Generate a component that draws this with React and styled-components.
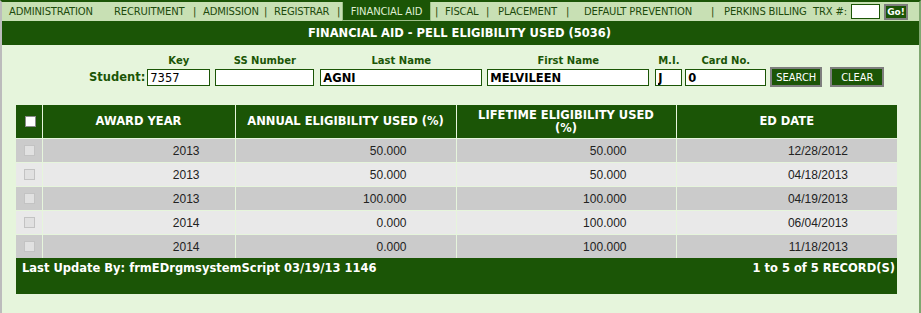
import React from "react";
import styled, { createGlobalStyle } from "styled-components";

const DARK = "#1b5506";
const PALE = "#e6f5dc";

const GlobalStyle = createGlobalStyle`
  html, body {
    margin: 0;
    padding: 0;
    background: ${PALE};
  }
  body {
    font-family: "DejaVu Sans", Tahoma, Verdana, sans-serif;
  }
`;

const Page = styled.div`
  height: 313px;
  box-sizing: border-box;
  border-left: 2px solid #bcbcbc;
  border-right: 2px solid #7fa770;
  border-top: 2px solid ${DARK};
  background: ${PALE};
`;

const NavBar = styled.div`
  height: 19px;
  background: #c8e0b4;
  display: flex;
  align-items: center;
  font-size: 10px;
  letter-spacing: -0.15px;
  color: #1d4a0c;
  white-space: nowrap;
`;

const NavItem = styled.span`
  flex: none;
  display: flex;
  align-items: center;
  justify-content: ${(p) => (p.$active ? "center" : "flex-start")};
  width: ${(p) => p.$w}px;
  height: 19px;
  box-sizing: border-box;
  margin-left: ${(p) => p.$ml || 0}px;
  ${(p) =>
    p.$active &&
    `
    background: ${DARK};
    color: #dfeed3;
    border: 1px solid #9dbf88;
    border-top: none;
  `}
`;

const Sep = styled.span`
  flex: none;
  width: 3px;
  text-align: center;
  margin-left: ${(p) => p.$ml}px;
  color: #1d4a0c;
`;

const TrxInput = styled.input`
  flex: none;
  width: 29px;
  height: 15px;
  box-sizing: border-box;
  margin: 0;
  padding: 0;
  border: 1px solid ${DARK};
  background: #fff;
`;

const GoButton = styled.button`
  flex: none;
  margin-left: 4px;
  height: 16px;
  width: 24px;
  padding: 0;
  box-sizing: border-box;
  background: ${DARK};
  color: #fff;
  font: bold 9px "DejaVu Sans", Tahoma, sans-serif;
  border: 2px solid #7d7d7d;
`;

const TitleBar = styled.div`
  height: 24px;
  background: ${DARK};
  color: #fff;
  font-weight: bold;
  font-size: 11.5px;
  display: flex;
  align-items: center;
  justify-content: center;
  padding-right: 2px;
`;

const SearchForm = styled.div`
  display: flex;
  align-items: flex-end;
  padding: 10px 0 0 87px;
`;

const StudentLabel = styled.div`
  color: ${DARK};
  font-weight: bold;
  font-size: 11.5px;
  height: 17px;
  line-height: 17px;
  margin-right: 2px;
`;

const Field = styled.div`
  display: flex;
  flex-direction: column;
  align-items: center;
  margin-left: ${(p) => p.$ml || 0}px;
`;

const FieldLabel = styled.label`
  color: ${DARK};
  font-weight: bold;
  font-size: 10px;
  height: 14px;
  line-height: 12px;
`;

const TextInput = styled.input`
  width: ${(p) => p.$w}px;
  height: 17px;
  box-sizing: border-box;
  margin: 0;
  padding: 0 2px;
  border: 1px solid ${DARK};
  background: #fff;
  color: #000;
  font-family: "DejaVu Sans", Tahoma, sans-serif;
  font-size: 11.5px;
  font-weight: ${(p) => (p.$bold ? "bold" : "normal")};
`;

const ActionButton = styled.button`
  width: ${(p) => p.$w}px;
  height: 20px;
  margin: 0 0 -1px ${(p) => p.$ml}px;
  box-sizing: border-box;
  padding: 0;
  background: ${DARK};
  color: #fff;
  border: 2px solid #7e7e7e;
  font-family: "DejaVu Sans Condensed", "DejaVu Sans", Tahoma, sans-serif;
  font-size: 11px;
`;

const Grid = styled.table`
  margin: 19px 0 0 14px;
  width: 881px;
  border-collapse: collapse;
  table-layout: fixed;
`;

const HeadCell = styled.th`
  background: ${DARK};
  color: #fff;
  font-weight: bold;
  font-size: 11.5px;
  height: 33px;
  padding: 0;
  text-align: center;
  line-height: 13px;
  border-left: 1px solid ${PALE};
  &:first-child {
    border-left: none;
  }
`;

const Row = styled.tr`
  background: ${(p) => (p.$alt ? "#e9e9e9" : "#cbcbcb")};
  border-top: 1px solid ${PALE};
`;

const Cell = styled.td`
  height: 21px;
  padding: 0 ${(p) => p.$pr}px 0 0;
  text-align: right;
  font-family: "Liberation Sans", Arial, sans-serif;
  font-size: 12px;
  line-height: 14px;
  color: #222;
  border-left: 1px solid ${PALE};
  &:first-child {
    border-left: none;
    text-align: left;
    padding-left: 8px;
  }
`;

const Box = styled.span`
  display: block;
  width: 11px;
  height: 11px;
  box-sizing: border-box;
  background: ${(p) => (p.$white ? "#fff" : "#e1e1e1")};
  border: 1px solid ${(p) => (p.$white ? "#8a8a8a" : "#c3c3c3")};
`;

const HeadBox = styled(Box)`
  margin-left: 9px;
`;

const FootCell = styled.td`
  background: ${DARK};
  color: #fff;
  font-weight: bold;
  font-size: 11.5px;
  height: 33px;
  line-height: 14px;
  vertical-align: top;
  padding: 3px 2px 0 6px;
`;

const FootInner = styled.div`
  display: flex;
  justify-content: space-between;
`;

const navItems = [
  { label: "ADMINISTRATION", ml: 7, w: 84 },
  { label: "RECRUITMENT", ml: 21, w: 70 },
  { sep: true, ml: 9 },
  { label: "ADMISSION", ml: 7, w: 54 },
  { sep: true, ml: 7 },
  { label: "REGISTRAR", ml: 7, w: 56 },
  { sep: true, ml: 7 },
  { label: "FINANCIAL AID", ml: 2, w: 89, active: true },
  { sep: true, ml: 4 },
  { label: "FISCAL", ml: 7, w: 33 },
  { sep: true, ml: 8 },
  { label: "PLACEMENT", ml: 9, w: 60 },
  { sep: true, ml: 8 },
  { label: "DEFAULT PREVENTION", ml: 15, w: 112 },
  { sep: true, ml: 15 },
  { label: "PERKINS BILLING", ml: 10, w: 82 },
  { label: "TRX #:", ml: 7, w: 38 },
];

const rows = [
  { year: "2013", annual: "50.000", lifetime: "50.000", date: "12/28/2012" },
  { year: "2013", annual: "50.000", lifetime: "50.000", date: "04/18/2013" },
  { year: "2013", annual: "100.000", lifetime: "100.000", date: "04/19/2013" },
  { year: "2014", annual: "0.000", lifetime: "100.000", date: "06/04/2013" },
  { year: "2014", annual: "0.000", lifetime: "100.000", date: "11/18/2013" },
];

const App = () => {
  return (
    <Page>
      <GlobalStyle />
      <NavBar>
        {navItems.map((item, i) =>
          item.sep ? (
            <Sep key={i} $ml={item.ml}>
              |
            </Sep>
          ) : (
            <NavItem key={i} $ml={item.ml} $w={item.w} $active={item.active}>
              {item.label}
            </NavItem>
          )
        )}
        <TrxInput />
        <GoButton>Go!</GoButton>
      </NavBar>
      <TitleBar>FINANCIAL AID - PELL ELIGIBILITY USED (5036)</TitleBar>

      <SearchForm>
        <StudentLabel>Student:</StudentLabel>
        <Field>
          <FieldLabel>Key</FieldLabel>
          <TextInput $w={63} defaultValue="7357" />
        </Field>
        <Field $ml={5}>
          <FieldLabel>SS Number</FieldLabel>
          <TextInput $w={99} defaultValue="" />
        </Field>
        <Field $ml={6}>
          <FieldLabel>Last Name</FieldLabel>
          <TextInput $w={162} $bold defaultValue="AGNI" />
        </Field>
        <Field $ml={5}>
          <FieldLabel>First Name</FieldLabel>
          <TextInput $w={162} $bold defaultValue="MELVILEEN" />
        </Field>
        <Field $ml={6}>
          <FieldLabel>M.I.</FieldLabel>
          <TextInput $w={27} $bold defaultValue="J" />
        </Field>
        <Field $ml={3}>
          <FieldLabel>Card No.</FieldLabel>
          <TextInput $w={81} $bold defaultValue="0" />
        </Field>
        <ActionButton $w={52} $ml={4}>
          SEARCH
        </ActionButton>
        <ActionButton $w={54} $ml={8}>
          CLEAR
        </ActionButton>
      </SearchForm>

      <Grid>
        <colgroup>
          <col style={{ width: 26 }} />
          <col style={{ width: 193 }} />
          <col style={{ width: 221 }} />
          <col style={{ width: 220 }} />
          <col style={{ width: 221 }} />
        </colgroup>
        <thead>
          <tr>
            <HeadCell>
              <HeadBox $white />
            </HeadCell>
            <HeadCell>AWARD YEAR</HeadCell>
            <HeadCell>ANNUAL ELIGIBILITY USED (%)</HeadCell>
            <HeadCell>
              LIFETIME ELIGIBILITY USED
              <br />
              (%)
            </HeadCell>
            <HeadCell>ED DATE</HeadCell>
          </tr>
        </thead>
        <tbody>
          {rows.map((r, i) => (
            <Row key={i} $alt={i % 2 === 1}>
              <Cell>
                <Box />
              </Cell>
              <Cell $pr={35}>{r.year}</Cell>
              <Cell $pr={49}>{r.annual}</Cell>
              <Cell $pr={49}>{r.lifetime}</Cell>
              <Cell $pr={49}>{r.date}</Cell>
            </Row>
          ))}
          <tr>
            <FootCell colSpan={5}>
              <FootInner>
                <span>Last Update By: frmEDrgmsystemScript 03/19/13 1146</span>
                <span>1 to 5 of 5 RECORD(S)</span>
              </FootInner>
            </FootCell>
          </tr>
        </tbody>
      </Grid>
    </Page>
  );
};

export default App;
